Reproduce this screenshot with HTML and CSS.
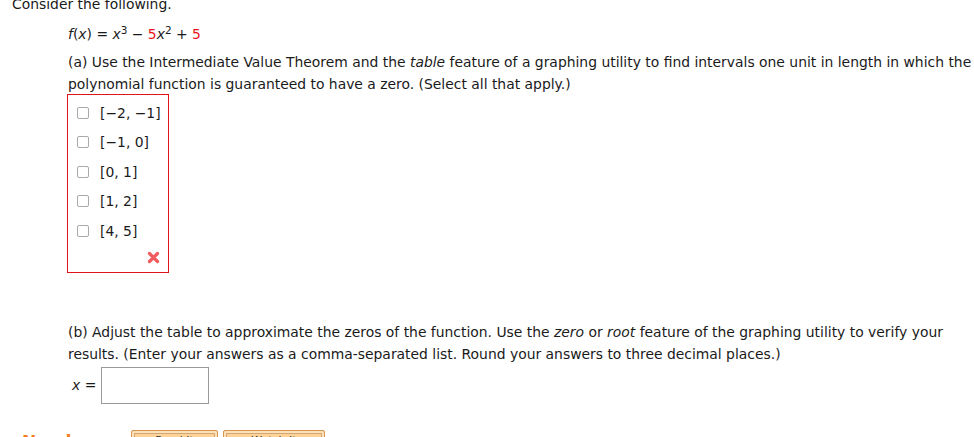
FILE: index.html
```html
<!DOCTYPE html>
<html lang="en">
<head>
    <meta charset="UTF-8">
    <title>Consider the following</title>
    <link rel="stylesheet" href="styles.css">
</head>
<body>
    <div class="page">
        <p class="intro">Consider the following.</p>

        <div class="question">
            <p class="formula"><i>f</i>(<i>x</i>) = <i>x</i><sup>3</sup> &minus; <span class="red">5</span><i>x</i><sup>2</sup> + <span class="red">5</span></p>

            <p class="part">(a) Use the Intermediate Value Theorem and the <i>table</i> feature of a graphing utility to find intervals one unit in length in which the polynomial function is guaranteed to have a zero. (Select all that apply.)</p>

            <div class="choices">
                <label class="choice"><input type="checkbox"><span>[&minus;2, &minus;1]</span></label>
                <label class="choice"><input type="checkbox"><span>[&minus;1, 0]</span></label>
                <label class="choice"><input type="checkbox"><span>[0, 1]</span></label>
                <label class="choice"><input type="checkbox"><span>[1, 2]</span></label>
                <label class="choice"><input type="checkbox"><span>[4, 5]</span></label>
                <div class="mark">
                    <svg width="13" height="13" viewBox="0 0 13 13">
                        <path d="M2.5 2.5 L10.5 10.5 M10.5 2.5 L2.5 10.5" stroke="#f25c5c" stroke-width="3.2" stroke-linecap="round"/>
                    </svg>
                </div>
            </div>

            <p class="part part-b">(b) Adjust the table to approximate the zeros of the function. Use the <i>zero</i> or <i>root</i> feature of the graphing utility to verify your results. (Enter your answers as a comma-separated list. Round your answers to three decimal places.)</p>

            <div class="answer">
                <span class="answer-label"><i>x</i> =</span>
                <input type="text" class="answer-box">
            </div>
        </div>

        <div class="help">
            <span class="help-text">Need Help?</span>
            <button class="help-btn">Read It</button>
            <button class="help-btn wide">Watch It</button>
        </div>
    </div>
</body>
</html>
```

FILE: styles.css
```css
* {
    margin: 0;
    padding: 0;
    box-sizing: border-box;
}

body {
    font-family: Verdana, 'DejaVu Sans', sans-serif;
    font-size: 13.9px;
    color: #1a1a1a;
    background: white;
    overflow: hidden;
}

.page {
    padding-left: 12px;
    margin-top: -7px;
}

p {
    line-height: 22px;
}

.red {
    color: #e8141c;
}

sup {
    font-size: 10.5px;
    line-height: 0;
    vertical-align: 5px;
}

.question {
    margin-left: 56px;
    margin-top: 8px;
}

.part {
    margin-top: 6px;
}

.choices {
    width: 102px;
    border: 1px solid #e2131b;
    margin-left: -1px;
    margin-top: -1px;
    padding: 3px 0 7px 9px;
}

.choice {
    display: flex;
    align-items: center;
    gap: 11px;
    height: 29.5px;
}

.choice input {
    appearance: none;
    width: 12px;
    height: 12px;
    border: 1px solid #a9a9a9;
    border-radius: 2px;
    background: white;
}

.mark {
    display: flex;
    justify-content: flex-end;
    padding-right: 8px;
    margin-top: 5px;
    height: 14px;
}

.part-b {
    margin-top: 48px;
}

.answer {
    display: flex;
    align-items: center;
    gap: 5px;
    margin-top: 2px;
    padding-left: 4px;
}

.answer-box {
    width: 108px;
    height: 37px;
    border: 1px solid #9a9a9a;
    background: white;
}

.help {
    display: flex;
    align-items: flex-start;
    gap: 5px;
    margin-top: 26px;
    padding-left: 10px;
}

.help-text {
    color: #f77b1a;
    font-weight: bold;
    font-size: 17px;
    margin-top: 2px;
    width: 104px;
}

.help-btn {
    width: 87px;
    height: 22px;
    border: 1px solid #d5954f;
    border-radius: 2px;
    background: #fdd39a;
    box-shadow: inset 0 0 0 2px #fde1b8, inset 0 0 0 3px #d7a571;
    font-family: Verdana, 'DejaVu Sans', sans-serif;
    font-size: 11px;
    color: #333;
}

.help-btn.wide {
    width: 102px;
}
```
